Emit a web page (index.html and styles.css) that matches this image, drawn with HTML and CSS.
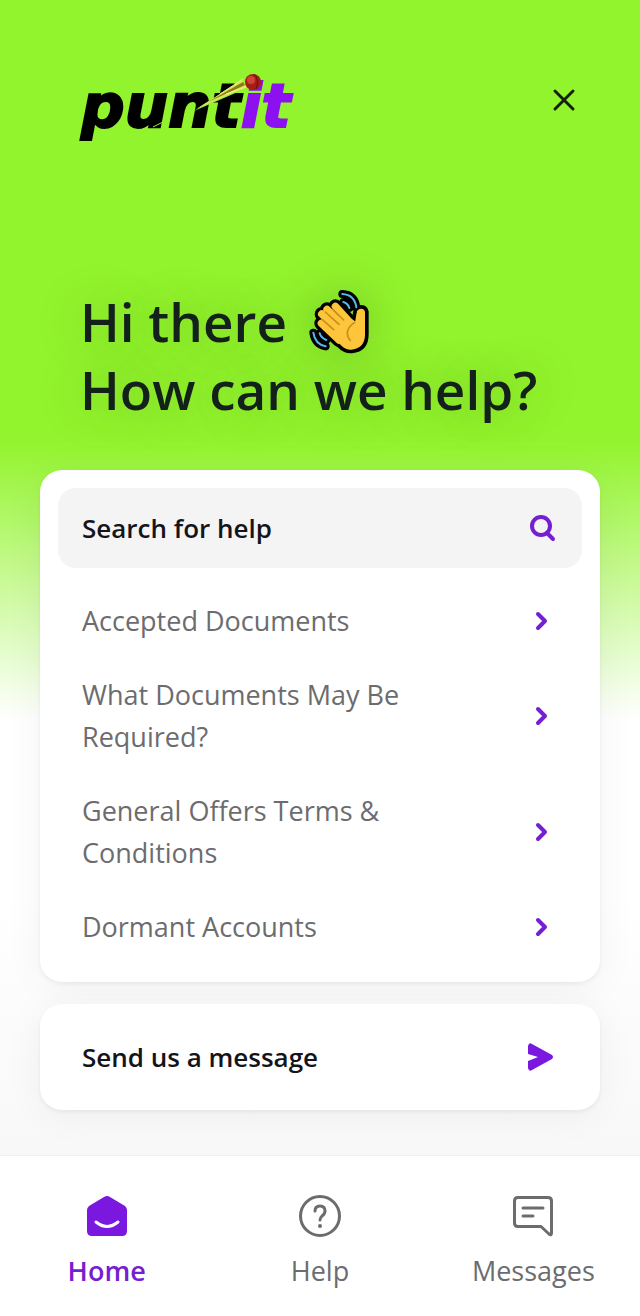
FILE: index.html
```html
<!DOCTYPE html>
<html lang="en">
<head>
	<meta charset="utf-8">
	<meta name="viewport" content="width=device-width, initial-scale=1">
	<title>Puntit</title>
	<link rel="stylesheet" href="styles.css">
</head>
<body>
	<header class="header">
		<div class="header_bar">
			<svg class="logo" viewBox="10 8 220 80" role="img" aria-label="puntit">
				<text class="logo_text" x="11" y="67">punt<tspan class="logo_it">it</tspan></text>
				<!-- ball and its trail -->
				<path d="M124 51L171 21L177 28Z" fill="#92f42c"/>
				<path d="M126 49L172 20L177 27Z" fill="#d8e25a"/>
				<path d="M138 42L173 22L175 25Z" fill="#8c7a14"/>
				<path d="M150 34L173 19M156 34L176 27" stroke="#f3f58a" fill="none"/>
				<path d="M83 67L93 62" stroke="#92f42c" fill="none"/>
				<circle cx="183" cy="22" r="8" fill="#a51d17"/>
				<circle cx="181" cy="20" r="4" fill="#cf4434"/>
				<path d="M184 14Q190 20 186 29" stroke="#5d120c" fill="none"/>
			</svg>
			<button class="close" type="button" aria-label="Close">
				<svg width="24" height="24" viewBox="0 0 24 24"><path d="M3 3L21 21M21 3L3 21"/></svg>
			</button>
		</div>
		<h1 class="title">Hi there
			<svg class="wave" viewBox="50 30 180 192" role="img" aria-label="waving hand">
				<g class="wave_outline">
					<path d="M150 42Q187 44 192 82M153 66Q167 70 171 84M63 158Q68 193 100 199M82 160Q86 174 102 180"/>
					<path d="M87 130L140 180M88 102L150 165M104 88L165 150M129 79L185 140"/>
					<path d="M102 145L145 192Q160 208 178 207Q216 203 216 163V96Q214 88 206 88Q196 89 195 98L190 128L150 100Z"/>
				</g>
				<g class="wave_motion">
					<path d="M150 42Q187 44 192 82M153 66Q167 70 171 84M63 158Q68 193 100 199M82 160Q86 174 102 180"/>
				</g>
				<g class="wave_fingers">
					<path d="M87 130L140 180M88 102L150 165M104 88L165 150M129 79L185 140"/>
				</g>
				<path class="wave_palm" d="M102 145L145 192Q160 208 178 207Q216 203 216 163V96Q214 88 206 88Q196 89 195 98L190 128L150 100Z"/>
				<path class="wave_lines" d="M90 119L124 149M99 96L140 133M121 88L154 120M187 127Q166 141 165 158Q165 172 174 181"/>
			</svg><br>
			How can we help?</h1>
	</header>

	<main class="content">
		<section class="card help">
			<button class="search" type="button">
				<span>Search for help</span>
				<svg class="icon" width="28" height="28" viewBox="0 0 28 28"><circle cx="13" cy="12" r="9"/><path d="M19 19L25 25"/></svg>
			</button>
			<ul class="links">
				<li><a href="#">
					<span>Accepted Documents</span>
					<svg class="icon" width="28" height="28" viewBox="0 0 28 28"><path d="M10 7L17 14L10 21"/></svg>
				</a></li>
				<li><a href="#">
					<span>What Documents May Be Required?</span>
					<svg class="icon" width="28" height="28" viewBox="0 0 28 28"><path d="M10 7L17 14L10 21"/></svg>
				</a></li>
				<li><a href="#">
					<span>General Offers Terms &amp; Conditions</span>
					<svg class="icon" width="28" height="28" viewBox="0 0 28 28"><path d="M10 7L17 14L10 21"/></svg>
				</a></li>
				<li><a href="#">
					<span>Dormant Accounts</span>
					<svg class="icon" width="28" height="28" viewBox="0 0 28 28"><path d="M10 7L17 14L10 21"/></svg>
				</a></li>
			</ul>
		</section>

		<button class="card message" type="button">
			<span>Send us a message</span>
			<svg width="28" height="28" viewBox="0 0 28 28"><path d="M1 3Q2 -1 5 1L25 12Q27 14 25 16L5 27Q2 29 1 25V18L11 14L1 11Z" fill="#7a18e0"/></svg>
		</button>
	</main>

	<nav class="tabs">
		<a class="tab tab_active" href="#">
			<svg width="44" height="44" viewBox="0 0 44 44">
				<path d="M19 3Q22 1 25 3L40 12Q42 14 42 16V37Q42 42 37 42H7Q2 42 2 37V16Q2 14 4 12Z" fill="#7a18e0"/>
				<path d="M11 28Q22 37 33 28" fill="none" stroke="#fff" stroke-width="3" stroke-linecap="round"/>
			</svg>
			<span>Home</span>
		</a>
		<a class="tab" href="#">
			<svg class="tab_icon" width="44" height="44" viewBox="0 0 44 44">
				<circle cx="22" cy="22" r="19.5"/>
				<path d="M17 17Q17 12 22 12Q27 12 27 17Q27 20 24 22Q22 24 22 26"/>
				<circle cx="22" cy="32" r="2" fill="#6c6c6f" stroke="none"/>
			</svg>
			<span>Help</span>
		</a>
		<a class="tab" href="#">
			<svg class="tab_icon" width="44" height="44" viewBox="0 0 44 44">
				<path d="M7 3.500H37Q40.500 3.500 40.500 7V39Q40.500 42 38 40L30 32.500H7Q3.500 32.500 3.500 29V7Q3.500 3.500 7 3.500Z"/>
				<path d="M12 14H32M12 22H22"/>
			</svg>
			<span>Messages</span>
		</a>
	</nav>
</body>
</html>
```

FILE: styles.css
```css
* {
	box-sizing: border-box;
	margin: 0;
	padding: 0;
}

body {
	min-height: 100vh;
	display: flex;
	flex-direction: column;
	font-family: "Open Sans", "Noto Sans", sans-serif;
	font-size: 27px;
	line-height: 42px;
	color: #14141a;
	background: linear-gradient(#92f42c 440px, #fff 720px, #fff 900px, #f8f8f8 1150px);
}

button {
	font: inherit;
	color: inherit;
	border: none;
	cursor: pointer;
}

a {
	color: inherit;
	text-decoration: none;
}

.header {
	padding: 68px 60px 46px 80px;
}

.header_bar {
	display: flex;
	justify-content: space-between;
	align-items: center;
}

.logo {
	width: 220px;
	height: 80px;
	overflow: visible;
}

.logo_text {
	font-family: "DejaVu Sans", sans-serif;
	font-size: 61px;
	font-weight: bold;
	font-style: italic;
	fill: #000;
	stroke: #000;
	stroke-width: 2;
}

.logo_it {
	fill: #8c10f0;
	stroke: #8c10f0;
}

.close {
	width: 32px;
	height: 32px;
	margin-bottom: 16px;
	background: none;
}

.close svg {
	display: block;
	margin: auto;
	fill: none;
	stroke: #14200c;
	stroke-width: 3;
	stroke-linecap: round;
}

.title {
	margin-top: 140px;
	font-size: 53px;
	font-weight: 600;
	line-height: 68px;
	color: #14201a;
	text-shadow: 0 0 50px rgba(0, 0, 0, 0.25);
}

.wave {
	width: 60px;
	height: 64px;
	margin-left: 8px;
	vertical-align: -12px;
	overflow: visible;
	filter: drop-shadow(0 0 24px rgba(0, 0, 0, 0.2));
}

.wave path {
	fill: none;
	stroke-linecap: round;
	stroke-linejoin: round;
}

.wave_outline {
	stroke: #000;
	stroke-width: 26;
}

.wave_outline path:nth-child(2) {
	stroke-width: 42;
}

.wave_outline path:first-child {
	stroke-width: 24;
}

.wave_motion {
	stroke: #54b8ee;
	stroke-width: 6;
}

.wave_fingers {
	stroke: #fdc53b;
	stroke-width: 22;
}

.wave .wave_palm {
	fill: #fdc53b;
	stroke: #fdc53b;
	stroke-width: 4;
}

.wave_lines {
	stroke: #cd8d15;
	stroke-width: 5;
}

.content {
	flex: 1;
	display: flex;
	flex-direction: column;
	gap: 22px;
	padding: 0 40px 44px;
}

.card {
	background: #fff;
	border-radius: 22px;
	box-shadow: 0 2px 4px rgba(0, 0, 0, 0.06), 0 4px 40px rgba(0, 0, 0, 0.05);
}

.help {
	padding: 18px;
}

.search {
	width: 100%;
	height: 80px;
	display: flex;
	justify-content: space-between;
	align-items: center;
	padding: 0 26px 0 24px;
	font-size: 26px;
	font-weight: 600;
	background: #f4f4f4;
	border-radius: 18px;
}

.icon {
	flex: none;
	fill: none;
	stroke: #7420d0;
	stroke-width: 4;
	stroke-linejoin: round;
	stroke-linecap: round;
}

.links {
	margin-top: 16px;
	list-style: none;
	color: #6c6c6f;
}

.links a {
	display: flex;
	justify-content: space-between;
	align-items: center;
	gap: 72px;
	padding: 16px 26px 16px 24px;
}

.message {
	display: flex;
	justify-content: space-between;
	align-items: center;
	padding: 32px 45px 32px 42px;
	font-size: 26px;
	font-weight: 600;
}

.tabs {
	position: sticky;
	bottom: 0;
	display: grid;
	grid-template-columns: repeat(3, 1fr);
	padding: 38px 0 24px;
	background: #fff;
	border-top: 1px solid #f0f0f0;
}

.tab {
	display: flex;
	flex-direction: column;
	align-items: center;
	gap: 12px;
	color: #6c6c6f;
}

.tab_active {
	font-weight: 600;
	color: #7420d0;
}

.tab_icon {
	fill: none;
	stroke: #6c6c6f;
	stroke-width: 3;
	stroke-linecap: round;
	stroke-linejoin: round;
}
```
